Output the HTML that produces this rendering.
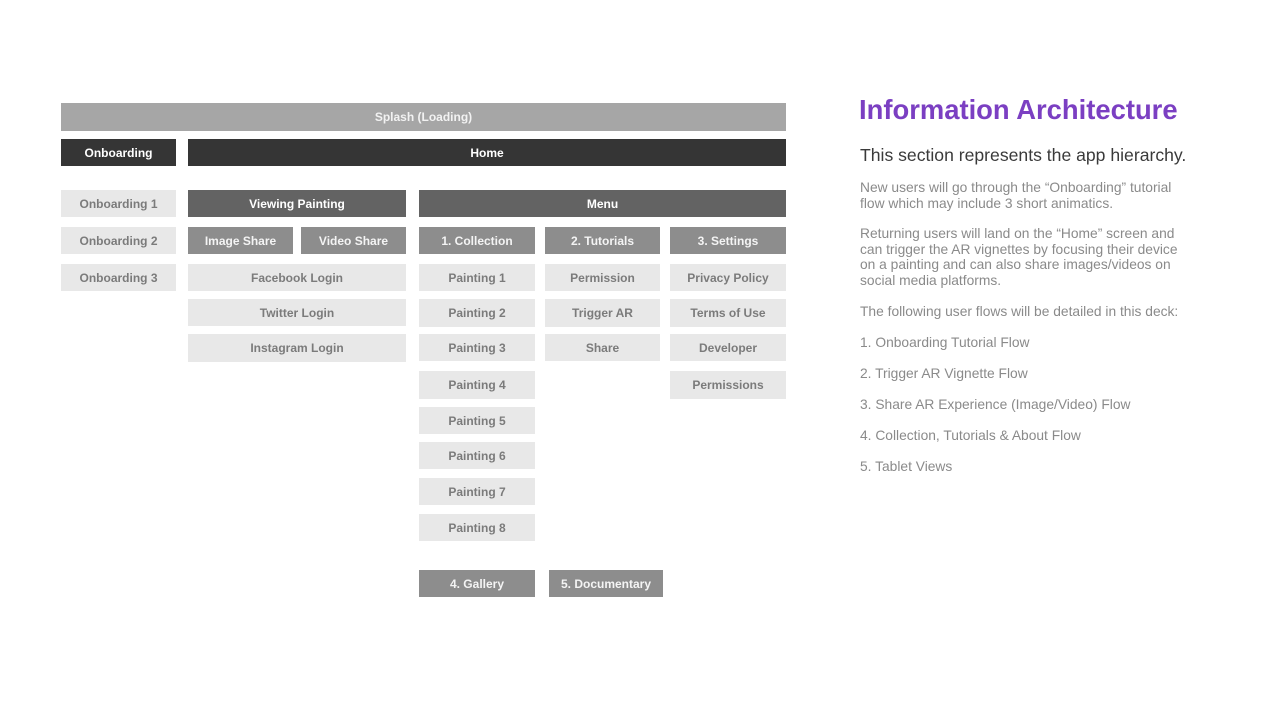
<!DOCTYPE html>
<html><head><meta charset="utf-8"><style>
body{margin:0;width:1280px;height:720px;background:#fff;position:relative;overflow:hidden;font-family:"Liberation Sans",Arial,sans-serif}
.b{position:absolute;display:flex;align-items:center;justify-content:center;font-size:12px;font-weight:bold;box-sizing:border-box}
.s{background:#a6a6a6;color:#f2f2f2}
.d{background:#353535;color:#fff}
.m{background:#636363;color:#fff}
.g{background:#8d8d8d;color:#f4f4f4}
.l{background:#e8e8e8;color:#7b7b7b}
.t{position:absolute;left:860px;color:#8a8a8a;font-size:13.8px;line-height:15.6px;white-space:nowrap}
</style></head><body>
<div class="b s" style="left:61px;top:103px;width:725px;height:28px">Splash (Loading)</div>
<div class="b d" style="left:61px;top:139px;width:115px;height:27px">Onboarding</div>
<div class="b d" style="left:188px;top:139px;width:598px;height:27px">Home</div>

<div class="b l" style="left:61px;top:190px;width:115px;height:27px">Onboarding 1</div>
<div class="b l" style="left:61px;top:227px;width:115px;height:27px">Onboarding 2</div>
<div class="b l" style="left:61px;top:264px;width:115px;height:27px">Onboarding 3</div>

<div class="b m" style="left:188px;top:190px;width:218px;height:27px">Viewing Painting</div>
<div class="b g" style="left:188px;top:227px;width:105px;height:27px">Image Share</div>
<div class="b g" style="left:301px;top:227px;width:105px;height:27px">Video Share</div>
<div class="b l" style="left:188px;top:264px;width:218px;height:27px">Facebook Login</div>
<div class="b l" style="left:188px;top:299px;width:218px;height:27px">Twitter Login</div>
<div class="b l" style="left:188px;top:334px;width:218px;height:28px">Instagram Login</div>

<div class="b m" style="left:419px;top:190px;width:367px;height:27px">Menu</div>
<div class="b g" style="left:419px;top:227px;width:116px;height:27px">1. Collection</div>
<div class="b g" style="left:545px;top:227px;width:115px;height:27px">2. Tutorials</div>
<div class="b g" style="left:670px;top:227px;width:116px;height:27px">3. Settings</div>

<div class="b l" style="left:419px;top:264px;width:116px;height:27px">Painting 1</div>
<div class="b l" style="left:419px;top:299px;width:116px;height:28px">Painting 2</div>
<div class="b l" style="left:419px;top:334px;width:116px;height:27px">Painting 3</div>
<div class="b l" style="left:419px;top:371px;width:116px;height:28px">Painting 4</div>
<div class="b l" style="left:419px;top:407px;width:116px;height:27px">Painting 5</div>
<div class="b l" style="left:419px;top:442px;width:116px;height:27px">Painting 6</div>
<div class="b l" style="left:419px;top:478px;width:116px;height:27px">Painting 7</div>
<div class="b l" style="left:419px;top:514px;width:116px;height:27px">Painting 8</div>

<div class="b l" style="left:545px;top:264px;width:115px;height:27px">Permission</div>
<div class="b l" style="left:545px;top:299px;width:115px;height:28px">Trigger AR</div>
<div class="b l" style="left:545px;top:334px;width:115px;height:27px">Share</div>

<div class="b l" style="left:670px;top:264px;width:116px;height:27px">Privacy Policy</div>
<div class="b l" style="left:670px;top:299px;width:116px;height:28px">Terms of Use</div>
<div class="b l" style="left:670px;top:334px;width:116px;height:27px">Developer</div>
<div class="b l" style="left:670px;top:371px;width:116px;height:28px">Permissions</div>

<div class="b g" style="left:419px;top:570px;width:116px;height:27px">4. Gallery</div>
<div class="b g" style="left:549px;top:570px;width:114px;height:27px">5. Documentary</div>

<div style="position:absolute;left:859px;top:94px;font-size:27.4px;font-weight:bold;color:#7b3fc2;white-space:nowrap">Information Architecture</div>
<div style="position:absolute;left:860px;top:145px;font-size:17.6px;color:#3a3a3a;white-space:nowrap">This section represents the app hierarchy.</div>
<div class="t" style="top:180px">New users will go through the “Onboarding” tutorial<br>flow which may include 3 short animatics.</div>
<div class="t" style="top:226px">Returning users will land on the “Home” screen and<br>can trigger the AR vignettes by focusing their device<br>on a painting and can also share images/videos on<br>social media platforms.</div>
<div class="t" style="top:304px">The following user flows will be detailed in this deck:</div>
<div class="t" style="top:335px">1. Onboarding Tutorial Flow</div>
<div class="t" style="top:366px">2. Trigger AR Vignette Flow</div>
<div class="t" style="top:397px">3. Share AR Experience (Image/Video) Flow</div>
<div class="t" style="top:428px">4. Collection, Tutorials &amp; About Flow</div>
<div class="t" style="top:459px">5. Tablet Views</div>
</body></html>
